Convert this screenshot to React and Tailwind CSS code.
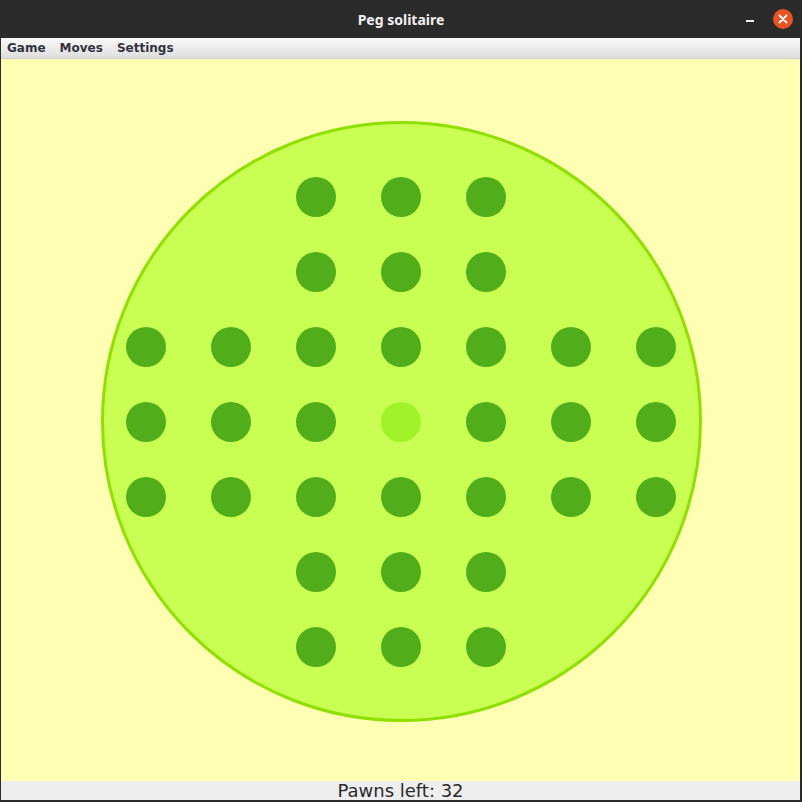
const LAYOUT = [
  [0, 0, 1, 1, 1, 0, 0],
  [0, 0, 1, 1, 1, 0, 0],
  [1, 1, 1, 1, 1, 1, 1],
  [1, 1, 1, 2, 1, 1, 1],
  [1, 1, 1, 1, 1, 1, 1],
  [0, 0, 1, 1, 1, 0, 0],
  [0, 0, 1, 1, 1, 0, 0],
]

function TitleBar() {
  return (
    <div className="relative flex h-[38px] items-center justify-center rounded-t-[8px] bg-[#2b2b2b]">
      <span className="font-['Noto_Sans',sans-serif] text-[14px] font-bold text-[#f0f0f0]">
        Peg solitaire
      </span>
      <span className="absolute right-[48px] top-[20px] h-[2px] w-[8px] bg-[#f0f0f0]" />
      <span className="absolute right-[9px] top-[9px] flex h-[20px] w-[20px] items-center justify-center rounded-full bg-[#e95420]">
        <svg width="10" height="10" viewBox="0 0 10 10">
          <path d="M1.5 1.5 L8.5 8.5 M8.5 1.5 L1.5 8.5" stroke="#fff" strokeWidth="1.8" strokeLinecap="round" />
        </svg>
      </span>
    </div>
  )
}

function MenuBar() {
  return (
    <div className="flex h-[21px] items-center gap-[14px] border-b border-[#cfcfcf] bg-gradient-to-b from-[#fafafa] to-[#dedede] px-[6px] font-['DejaVu_Sans',sans-serif] text-[12px] font-bold text-[#333340]">
      <span>Game</span>
      <span>Moves</span>
      <span>Settings</span>
    </div>
  )
}

function Board() {
  return (
    <div className="flex h-[601px] w-[601px] items-center justify-center rounded-full border-[3px] border-[#8fe000] bg-[#c8ff52]">
      <div className="grid grid-cols-[repeat(7,85px)] grid-rows-[repeat(7,75px)]">
        {LAYOUT.flatMap((row, r) =>
          row.map((cell, c) => (
            <div key={`${r}-${c}`} className="flex items-center justify-center">
              {cell === 1 && <span className="h-[40px] w-[40px] rounded-full bg-[#52ad1a]" />}
              {cell === 2 && <span className="h-[40px] w-[40px] rounded-full bg-[#a2f22a]" />}
            </div>
          ))
        )}
      </div>
    </div>
  )
}

export default function App() {
  return (
    <div className="flex h-[802px] w-[802px] flex-col overflow-hidden bg-[#2b2b2b]">
      <TitleBar />
      <div className="mx-[1px] flex flex-1 flex-col border-r border-[#2b2b2b]">
        <MenuBar />
        <div className="flex flex-1 justify-center bg-[#ffffb3] pt-[62px] pl-[1px]">
          <Board />
        </div>
        <div className="flex h-[19px] items-center justify-center bg-[#eeeeee] font-['DejaVu_Sans',sans-serif] text-[18px] leading-none text-[#2a2a2a]">
          Pawns left: 32
        </div>
      </div>
      <div className="h-[2px]" />
    </div>
  )
}
